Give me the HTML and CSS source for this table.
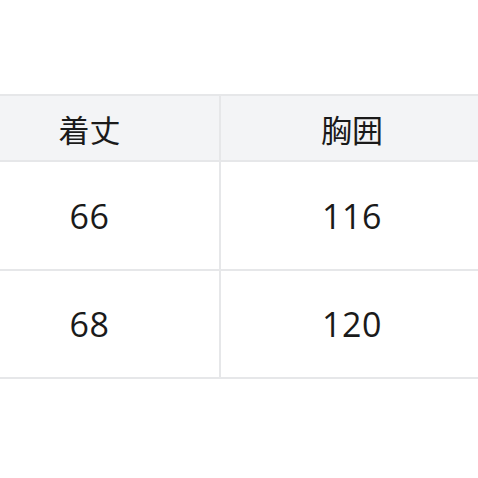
FILE: index.html
```html
<!DOCTYPE html>
<html lang="ja">
<head>
<meta charset="utf-8">
<link rel="stylesheet" href="styles.css">
</head>
<body>
<div class="size-table">
  <div class="cell head">着丈</div>
  <div class="cell head">胸囲</div>
  <div class="cell row1">66</div>
  <div class="cell row1">116</div>
  <div class="cell row2">68</div>
  <div class="cell row2">120</div>
</div>
</body>
</html>
```
FILE: styles.css
```css
html, body {
  margin: 0;
  padding: 0;
  background: #ffffff;
  overflow: hidden;
}
.size-table {
  display: grid;
  grid-template-columns: 261px 264px;
  margin: 94px 0 0 -40px;
  width: 525px;
  border-top: 2px solid #e6e7e9;
  font-family: "Open Sans", "Noto Sans CJK JP", sans-serif;
  color: #1a1a1a;
}
.cell {
  box-sizing: border-box;
  display: flex;
  align-items: center;
  justify-content: center;
  border-right: 2px solid #e6e7e9;
  border-bottom: 2px solid #e6e7e9;
  font-size: 34px;
  line-height: 1;
  letter-spacing: 0.5px;
}
.head {
  height: 66px;
  background: #f3f4f6;
  font-family: "Noto Sans CJK JP", sans-serif;
  font-size: 31px;
  letter-spacing: 0;
}
.row1 {
  height: 109px;
}
.row2 {
  height: 108px;
}
```
